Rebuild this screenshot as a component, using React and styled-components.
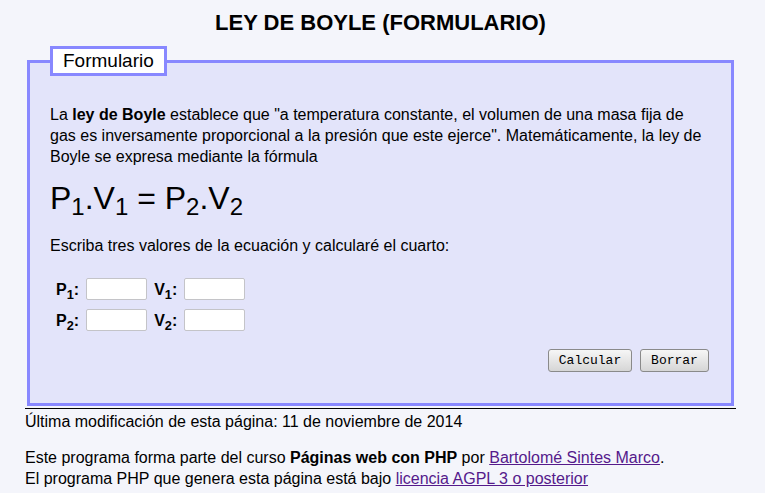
import React from 'react';
import styled, { createGlobalStyle } from 'styled-components';

const GlobalStyle = createGlobalStyle`
  html, body {
    margin: 0;
    background-color: #f4f5fb;
  }
  body {
    padding: 0 29px 0 25px;
    font-family: "Liberation Sans", Arial, sans-serif;
    font-size: 16px;
    line-height: 21px;
    color: #000000;
  }
`;

const Title = styled.h1`
  margin: 0;
  padding-top: 10px;
  height: 36px;
  text-align: center;
  font-size: 22px;
  line-height: 26px;
  font-weight: bold;
`;

const Fieldset = styled.fieldset`
  margin: 0 2px;
  padding: 0 20px 31px 20px;
  border: 3px solid #8888ff;
  background-color: #e3e4fa;
`;

const Legend = styled.legend`
  padding: 0 10px;
  border: 3px solid #8888ff;
  background-color: #ffffff;
  font-size: 19px;
  line-height: 24px;
`;

const Text = styled.p`
  margin: ${(props) => props.margin || '0'};
`;

const Formula = styled.p`
  margin: 11px 0 17px 0;
  font-size: 32px;
  line-height: 40px;

  sub {
    font-size: 0.75em;
    vertical-align: -0.25em;
    line-height: 0;
  }
`;

const ValuesTable = styled.table`
  margin: 16px 0 0 4px;
  border-collapse: separate;
  border-spacing: 2px 3px;
`;

const Label = styled.th`
  padding: 0 5px 0 0;
  text-align: left;
  font-weight: bold;
  font-size: 16px;

  sub {
    font-size: 0.8em;
    vertical-align: -0.3em;
    line-height: 0;
  }
`;

const Cell = styled.td`
  padding: 0 5px 0 0;
`;

const Input = styled.input`
  box-sizing: border-box;
  display: block;
  width: 61px;
  height: 22px;
  margin: 3px 0;
  border: 1px solid #c4c4c8;
  border-radius: 2px;
  background-color: #ffffff;
`;

const Buttons = styled.div`
  display: flex;
  justify-content: flex-end;
  gap: 8px;
  margin: 12px 2px 0 0;
`;

const Button = styled.button`
  box-sizing: border-box;
  width: ${(props) => props.width}px;
  height: 23px;
  padding: 0;
  border: 1px solid #8a8a8a;
  border-radius: 3px;
  background: linear-gradient(#f6f6f6, #d6d6d6);
  font-family: "Liberation Mono", "Courier New", monospace;
  font-size: 13px;
  color: #000000;
`;

const Rule = styled.hr`
  margin: 2px 0 0 0;
  border: none;
  border-top: 1px solid #000000;
`;

const Footer = styled.div`
  padding-top: 2px;
`;

const Link = styled.a`
  color: #551a8b;
  text-decoration: underline;
`;

const Field = ({ name, index }) => (
  <>
    <Label>
      {name}
      <sub>{index}</sub>
      :
    </Label>
    <Cell>
      <Input type="text" />
    </Cell>
  </>
);

const App = () => (
  <>
    <GlobalStyle />
    <Title>LEY DE BOYLE (FORMULARIO)</Title>
    <Fieldset>
      <Legend>Formulario</Legend>
      <Text margin="28px 0 0 0">
        La <strong>ley de Boyle</strong> establece que &quot;a temperatura constante, el volumen
        de una masa fija de gas es inversamente proporcional a la presión que este ejerce&quot;.
        Matemáticamente, la ley de Boyle se expresa mediante la fórmula
      </Text>
      <Formula>
        P<sub>1</sub>.V<sub>1</sub> = P<sub>2</sub>.V<sub>2</sub>
      </Formula>
      <Text>Escriba tres valores de la ecuación y calcularé el cuarto:</Text>
      <ValuesTable>
        <tbody>
          <tr>
            <Field name="P" index="1" />
            <Field name="V" index="1" />
          </tr>
          <tr>
            <Field name="P" index="2" />
            <Field name="V" index="2" />
          </tr>
        </tbody>
      </ValuesTable>
      <Buttons>
        <Button type="button" width={84}>Calcular</Button>
        <Button type="button" width={69}>Borrar</Button>
      </Buttons>
    </Fieldset>
    <Rule />
    <Footer>
      <Text>Última modificación de esta página: 11 de noviembre de 2014</Text>
      <Text margin="15px 0 0 0">
        Este programa forma parte del curso <strong>Páginas web con PHP</strong> por{' '}
        <Link href="#">Bartolomé Sintes Marco</Link>.
        <br />
        El programa PHP que genera esta página está bajo{' '}
        <Link href="#">licencia AGPL 3 o posterior</Link>
      </Text>
    </Footer>
  </>
);

export default App;
